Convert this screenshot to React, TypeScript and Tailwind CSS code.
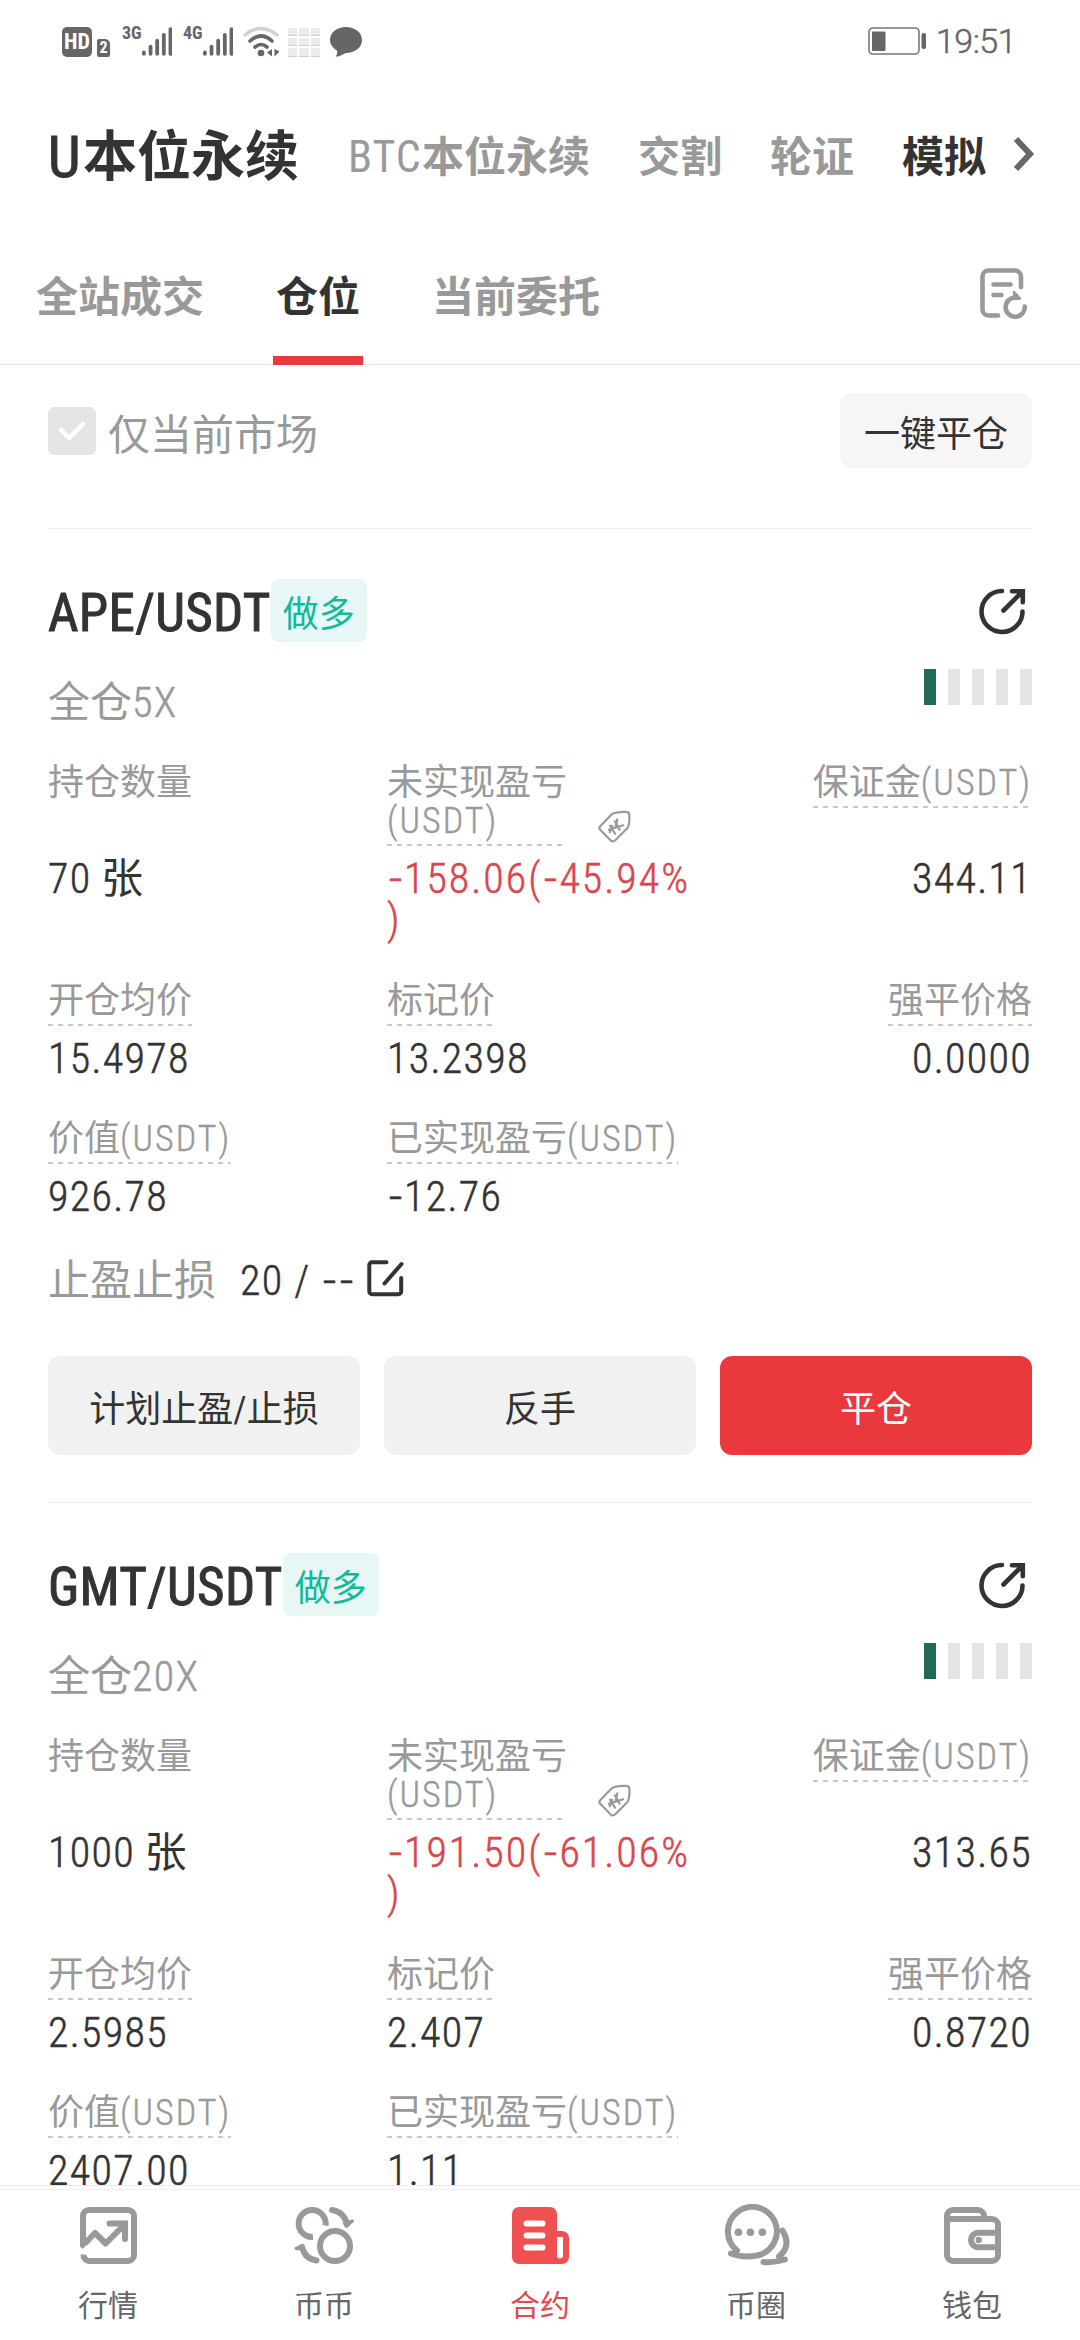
import React from 'react';

interface Position {
  pair: string;
  leverage: string;
  amount: string;
  unrealized: string;
  margin: string;
  openPrice: string;
  markPrice: string;
  liqPrice: string;
  value: string;
  realized: string;
  stop?: string;
}

const positions: Position[] = [
  {
    pair: 'APE/USDT',
    leverage: '5X',
    amount: '70',
    unrealized: '-158.06(-45.94%',
    margin: '344.11',
    openPrice: '15.4978',
    markPrice: '13.2398',
    liqPrice: '0.0000',
    value: '926.78',
    realized: '-12.76',
    stop: '20 / --',
  },
  {
    pair: 'GMT/USDT',
    leverage: '20X',
    amount: '1000',
    unrealized: '-191.50(-61.06%',
    margin: '313.65',
    openPrice: '2.5985',
    markPrice: '2.407',
    liqPrice: '0.8720',
    value: '2407.00',
    realized: '1.11',
  },
];

function Signal({ label }: { label: string }) {
  return (
    <div className="flex h-[31px] w-[50px] items-start justify-between">
      <span className="text-[18px] font-bold leading-[14px]">{label}</span>
      <svg width="32" height="31" viewBox="0 0 32 31" stroke="#666" strokeWidth="4" strokeLinecap="round">
        <path d="M2 27v1.5M9 21v7.5M16 14.5v14M23 8.5v20M30 2.500v26" />
      </svg>
    </div>
  );
}

function StatusBar() {
  return (
    <div className="flex h-[82px] shrink-0 items-center justify-between pl-[62px] pr-[64px] text-[#666]">
      <div className="flex h-[31px] items-end">
        <div className="flex h-[30px] w-[30px] items-center justify-center rounded-[5px] bg-[#666] text-[22px] font-bold leading-none text-white">
          HD
        </div>
        <div className="ml-[5px] flex h-[18px] w-[13px] items-center justify-center rounded-[2px] rounded-tr-[5px] bg-[#666] text-[16px] font-bold leading-none text-white">
          2
        </div>
        <div className="ml-[12px]"><Signal label="3G" /></div>
        <div className="ml-[11px]"><Signal label="4G" /></div>
        <svg className="ml-[10px]" width="36" height="31" viewBox="0 0 36 31" fill="none" strokeLinecap="round">
          <path d="M2 9Q18-4 34 9" stroke="#d2d2d2" strokeWidth="3.500" />
          <path d="M7 15Q18 5 29 15M12 21Q18 16 24 21" stroke="#666" strokeWidth="3.600" />
          <circle cx="18" cy="27" r="3.300" fill="#666" />
          <path d="M29 23v7.500l-5-4zM31.500 23v7.500l5-5z" fill="#666" />
        </svg>
        <div className="ml-[9px] grid h-[29px] w-[32px] grid-cols-3 gap-[2px]">
          {[0, 1, 2, 3, 4, 5, 6, 7, 8].map((i) => (
            <div key={i} className="border-b border-[#d0d0d0] bg-[#ebebeb]" />
          ))}
        </div>
        <svg className="ml-[10px]" width="32" height="31" viewBox="0 0 32 31" fill="#666">
          <path d="M16 1C25 1 32 6.500 32 14S25 27 16 27C13 28 10 31 5.500 30.500C7 29 7.500 27 7 24.500C3 22 0 18.500 0 14C0 6.500 7 1 16 1z" />
        </svg>
      </div>
      <div className="flex items-center">
        <svg width="59" height="28" viewBox="0 0 59 28" fill="none">
          <rect x="1" y="1" width="50" height="26" rx="4" stroke="#777" strokeWidth="1.600" />
          <rect x="4" y="4.500" width="13.500" height="19.500" rx="1" fill="#666" />
          <rect x="53.500" y="6" width="4.500" height="16" rx="2" fill="#666" />
        </svg>
        <span className="ml-[9px] font-[Roboto] text-[34px] font-light leading-[40px] tracking-[-0.5px] [-webkit-text-stroke:0.5px]">19:51</span>
      </div>
    </div>
  );
}

function MarketNav() {
  return (
    <div className="flex h-[150px] shrink-0 items-center pl-12 text-[42px] font-bold text-[#999]">
      <div className="flex w-[252px] items-center whitespace-nowrap text-[54px] text-[#333]">
        <span className="w-[35px] text-[58px] font-normal [-webkit-text-stroke:1px]">U</span>
        本位永续
      </div>
      <div className="ml-12 flex w-[242px] items-center whitespace-nowrap">
        <span className="w-[74px] text-[44px] font-normal tracking-[1px]">BTC</span>
        本位永续
      </div>
      <div className="ml-12">交割</div>
      <div className="ml-12">轮证</div>
      <div className="ml-12 text-[#333]">模拟</div>
      <svg className="-mt-[6px] ml-[27px]" width="22" height="38" viewBox="0 0 22 38" fill="none" stroke="#666" strokeWidth="6">
        <path d="M3 4l14 15L3 34" />
      </svg>
    </div>
  );
}

function TabBar() {
  return (
    <div className="flex h-[133px] shrink-0 items-center justify-between border-b border-[#e2e2e2] pr-[52px] text-[42px] font-bold text-[#999]">
      <div className="flex h-full">
        <div className="flex items-center px-9 pb-[2px]">全站成交</div>
        <div className="relative flex items-center px-9 pb-[2px] text-[#333]">
          仓位
          <div className="absolute -bottom-px left-[33px] h-[9px] w-[90px] bg-[#e9393d]" />
        </div>
        <div className="flex items-center px-9 pb-[2px]">当前委托</div>
      </div>
      <svg className="mb-[10px]" width="48" height="51" viewBox="0 0 48 51" fill="none" stroke="#999" strokeWidth="4.600" strokeLinecap="round">
        <path d="M41 19V8.500a6 6 0 0 0-6-6H8.500a6 6 0 0 0-6 6v33a6 6 0 0 0 6 6H18M13.500 16.500h17M13.500 27h8" />
        <path d="M44.800 38.500A9.600 9.600 0 1 1 36 29.600" />
        <path d="M34 24l6 6.500l-5 .5z" fill="#999" strokeWidth="2.500" strokeLinejoin="round" />
      </svg>
    </div>
  );
}

// Minus signs sit in a wider fixed box than the font gives them.
function Num({ text, className = 'tracking-[1.3px]' }: { text: string; className?: string }) {
  return (
    <span className={`font-light [-webkit-text-stroke:0.5px] ${className}`}>
      {text.split(/(-)/).map((part, i) =>
        part === '-' ? (
          <span key={i} className="inline-block w-[17px] scale-x-[1.3] text-center tracking-normal">-</span>
        ) : (
          part
        )
      )}
    </span>
  );
}

function Unit({ text }: { text: string }) {
  return <span className="font-light tracking-[2px] [-webkit-text-stroke:0.4px]">({text})</span>;
}

function Dashes() {
  return <div className="mt-1 h-[2px] bg-[repeating-linear-gradient(90deg,#c8c8c8_0_5px,transparent_5px_10px)]" />;
}

function Label({ text, unit, dashed = true }: { text: string; unit?: string; dashed?: boolean }) {
  return (
    <div className="w-fit whitespace-nowrap text-[36px] leading-[38px] text-[#999]">
      {text}
      {unit && <Unit text={unit} />}
      {dashed && <Dashes />}
    </div>
  );
}

function Cell({ label, unit, value, right }: { label: string; unit?: string; value: string; right?: boolean }) {
  return (
    <div className={right ? 'flex flex-col items-end' : 'flex flex-col'}>
      <div className="h-[56px]">
        <Label text={label} unit={unit} />
      </div>
      <div className="h-[42px]"><Num text={value} /></div>
    </div>
  );
}

function TagIcon() {
  return (
    <svg width="33" height="33" viewBox="0 0 33 33" fill="none" stroke="#999" strokeWidth="2.200" strokeLinejoin="round">
      <path d="M2 16.500L13 5Q16 1.500 28 1.800Q31 1.800 31.300 4.500Q32 14 29.500 18L17 30.500Q14.800 32.300 12.500 30.300L2 19.500Q.8 18 2 16.500z" />
      <path d="M10 20l16-5M11.500 15l6 9.500M16.500 10.500l5.500 10M11.500 23l3-8M17.500 17.500l2-9" />
    </svg>
  );
}

function RiskBars() {
  return (
    <div className="flex h-9 gap-3">
      <div className="w-3 bg-[#206a56]" />
      <div className="w-3 bg-[#e5e5e5]" />
      <div className="w-3 bg-[#e5e5e5]" />
      <div className="w-3 bg-[#e5e5e5]" />
      <div className="w-3 bg-[#e5e5e5]" />
    </div>
  );
}

function PositionCard({ item }: { item: Position }) {
  return (
    <div className="mx-12 shrink-0 border-b border-[#ebebeb] pb-[47px] pt-[50px] text-[42px] leading-[42px] text-[#333]">
      <div className="flex h-[63px] items-center">
        <div className="pt-[6px] text-[53px] font-normal leading-[63px] tracking-[0.3px] [-webkit-text-stroke:1px]">{item.pair}</div>
        <div className="flex h-[63px] w-[96px] items-center justify-center rounded-lg bg-[#e6f7f5] pt-[9px] text-[36px] text-[#12b99a]">
          做多
        </div>
        <svg className="ml-auto mr-[6px] mt-[2px]" width="47" height="47" viewBox="0 0 47 47" fill="none" stroke="#333" strokeWidth="4.600" strokeLinecap="round">
          <path d="M23 3A20.500 20.500 0 1 0 43.500 23.500M24.500 22.500L43 4M33 3.200h10.800v11" />
        </svg>
      </div>

      <div className="mt-[27px] flex h-[57px] items-start justify-between">
        <div className="mt-[10px] leading-[48px] text-[#999]">
          全仓<Num text={item.leverage} />
        </div>
        <RiskBars />
      </div>

      <div className="mt-[38px] grid grid-cols-[339px_1fr_auto]">
        <div>
          <div className="h-[94px]">
            <Label text="持仓数量" dashed={false} />
          </div>
          <Num text={item.amount} /> 张
        </div>
        <div>
          <div className="flex h-[94px] items-start">
            <div className="w-[175px] whitespace-nowrap text-[36px] leading-[38px] text-[#999]">
              未实现盈亏
              <br />
              <Unit text="USDT" />
              <Dashes />
            </div>
            <div className="ml-[36px] mt-[46px]">
              <TagIcon />
            </div>
          </div>
          <div className="h-[84px] whitespace-nowrap leading-[41px] text-[#d8474c]">
            <Num text={item.unrealized} className="tracking-[2px]" />
            <br />
            <Num text=")" />
          </div>
        </div>
        <div className="flex flex-col items-end">
          <div className="h-[94px]">
            <Label text="保证金" unit="USDT" />
          </div>
          <Num text={item.margin} />
        </div>
      </div>

      <div className="mt-10 grid grid-cols-[339px_1fr_auto] gap-y-10">
        <Cell label="开仓均价" value={item.openPrice} />
        <Cell label="标记价" value={item.markPrice} />
        <Cell label="强平价格" value={item.liqPrice} right />
        <Cell label="价值" unit="USDT" value={item.value} />
        <Cell label="已实现盈亏" unit="USDT" value={item.realized} />
      </div>

      {item.stop && (
        <>
          <div className="mt-[42px] flex h-[42px] items-center">
            <div className="w-[192px] text-[#999]">止盈止损</div>
            <div className="w-[127px] whitespace-nowrap"><Num text={item.stop} /></div>
            <svg className="-mt-[6px]" width="37" height="37" viewBox="0 0 37 37" fill="none" stroke="#333" strokeWidth="4" strokeLinecap="round" strokeLinejoin="round">
              <path d="M19.500 2.300H5a2.700 2.700 0 0 0-2.700 2.700v26.500a2.700 2.700 0 0 0 2.700 2.700h26.500a2.700 2.700 0 0 0 2.700-2.700V18M17.500 23.500L34.500 4" />
            </svg>
          </div>

          <div className="mt-[54px] grid h-[99px] grid-cols-3 gap-6 text-[36px]">
            <div className="flex items-center justify-center rounded-xl bg-[#f1f1f1] pt-[9px]">计划止盈/止损</div>
            <div className="flex items-center justify-center rounded-xl bg-[#f1f1f1] pt-[9px]">反手</div>
            <div className="flex items-center justify-center rounded-xl bg-[#e9393d] pt-[9px] text-white">平仓</div>
          </div>
        </>
      )}
    </div>
  );
}

function NavItem({ label, active, children }: { label: string; active?: boolean; children: React.ReactNode }) {
  return (
    <div className="flex flex-1 flex-col items-center">
      <div className="flex h-[62px] items-center">{children}</div>
      <div className={`mt-[22px] text-[30px] leading-[36px] ${active ? 'text-[#e0494d]' : 'text-[#666]'}`}>{label}</div>
    </div>
  );
}

function BottomNav() {
  return (
    <div className="h-[155px] shrink-0 border-t border-[#e8e8e8] bg-white pt-[3px]">
      <div className="flex border-t border-[#efefef] pt-[14px]">
        <NavItem label="行情">
          <svg width="57" height="57" viewBox="0 0 57 57" fill="none" stroke="#999" strokeWidth="6">
            <path d="M3 38V9a6 6 0 0 1 6-6h39a6 6 0 0 1 6 6v39a6 6 0 0 1-6 6H9a6 6 0 0 1-5.500-6.500" />
            <path d="M1 40.500L15 26l10.700 10.500L44 18" strokeLinejoin="round" />
            <path d="M29.500 16.500H45v15.500" strokeLinecap="round" />
            <path d="M-1 47l9-8" stroke="#fff" strokeWidth="3" />
          </svg>
        </NavItem>
        <NavItem label="币币">
          <svg width="60" height="58" viewBox="0 0 60 58" fill="none" stroke="#999" strokeWidth="6">
            <circle cx="41" cy="40" r="15" />
            <path d="M31.500 19.500A13.500 13.500 0 1 0 19 31" />
            <path d="M38 4Q50 6 53 18M22.500 54.500Q11 53 8 41" strokeLinecap="round" />
            <path d="M50.500 17.500l8-2.500l-6 5.500zM9 39.500l-7 3l7 .5z" fill="#999" strokeWidth="3" strokeLinejoin="round" />
          </svg>
        </NavItem>
        <NavItem label="合约" active>
          <svg width="57" height="57" viewBox="0 0 57 57" fill="#f0504f">
            <path d="M7 0h31a7 7 0 0 1 7 7v17h5a7 7 0 0 1 7 7v19a7 7 0 0 1-7 7H7a7 7 0 0 1-7-7V7a7 7 0 0 1 7-7z" />
            <path d="M45 30h6v18.500a3 3 0 0 1-6 0z" fill="#fff" />
            <path d="M14.500 16.500h16M14.500 28.500h16M14.500 40.500h16" stroke="#fff" strokeWidth="6" strokeLinecap="round" />
          </svg>
        </NavItem>
        <NavItem label="币圈">
          <svg width="69" height="62" viewBox="0 0 69 62" fill="none" stroke="#999" strokeWidth="6" strokeLinecap="round" strokeLinejoin="round">
            <path d="M15 46.500A24.500 24.500 0 1 1 35 51.500Q20 54 9 49.500" />
            <path d="M9 49.500l6-3" strokeWidth="4" />
            <path d="M60.500 26.500Q70 42 57 52.500M41.500 58Q52 59 63 55.500" />
            <path d="M57 52.500l6 3" strokeWidth="4" />
            <g fill="#999" stroke="none">
              <circle cx="16.400" cy="28.300" r="3.800" />
              <circle cx="28.400" cy="28.300" r="3.800" />
              <circle cx="40.400" cy="28.300" r="3.800" />
            </g>
          </svg>
        </NavItem>
        <NavItem label="钱包">
          <svg width="57" height="57" viewBox="0 0 57 57" fill="none" stroke="#999" strokeWidth="6">
            <path d="M3 14V9a6 6 0 0 1 6-6h25a6 6 0 0 1 6 6v3" />
            <path d="M3 12h45a6 6 0 0 1 6 6v30a6 6 0 0 1-6 6H9a6 6 0 0 1-6-6z" />
            <path d="M54 25.700H34.300a7.300 7.300 0 0 0 0 14.600H54" />
            <circle cx="34.700" cy="33" r="3.200" fill="#999" stroke="none" />
          </svg>
        </NavItem>
      </div>
    </div>
  );
}

export default function App() {
  return (
    <div className="flex h-[2340px] w-[1080px] flex-col overflow-hidden bg-white font-['Roboto_Condensed','Noto_Sans_CJK_SC',sans-serif]">
      <StatusBar />
      <MarketNav />
      <TabBar />

      <div className="mx-12 flex h-[164px] shrink-0 items-start justify-between border-b border-[#ebebeb] pt-[28px]">
        <div className="flex h-[75px] items-center">
          <div className="flex h-12 w-12 items-center justify-center rounded-md bg-[#e5e5e5]">
            <svg width="30" height="24" viewBox="0 0 30 24" fill="none" stroke="#fff" strokeWidth="4.500" strokeLinecap="round" strokeLinejoin="round">
              <path d="M4 11l8 8L26 5" />
            </svg>
          </div>
          <div className="ml-3 pt-[10px] text-[42px] leading-[48px] text-[#999]">仅当前市场</div>
        </div>
        <div className="flex h-[75px] w-[192px] items-center justify-center rounded-xl bg-[#f6f6f6] pt-[8px] text-[36px] text-[#333]">
          一键平仓
        </div>
      </div>

      <div className="flex min-h-0 flex-1 flex-col overflow-hidden">
        {positions.map((item) => (
          <PositionCard key={item.pair} item={item} />
        ))}
      </div>

      <BottomNav />
    </div>
  );
}
